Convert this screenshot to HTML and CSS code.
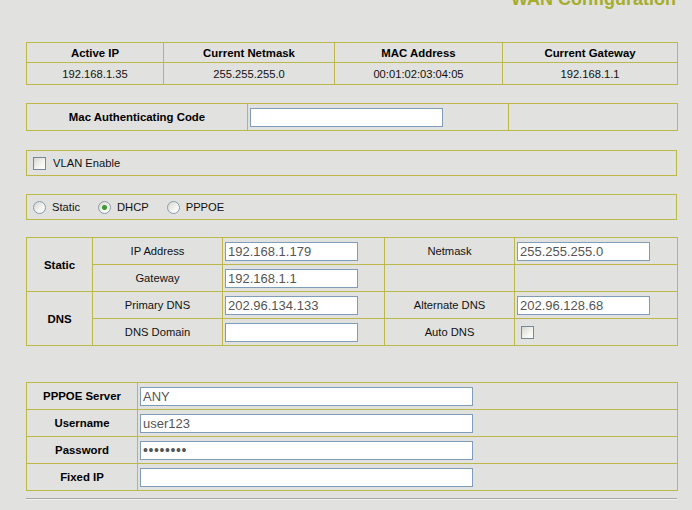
FILE: index.html
```html
<!DOCTYPE html>
<html>
<head>
<meta charset="utf-8">
<title>WAN Configuration</title>
<link rel="stylesheet" href="styles.css">
</head>
<body>
<div class="page">
  <h1 class="title">WAN Configuration</h1>

  <table class="grid status">
    <colgroup><col class="w137"><col class="w171"><col class="w168"><col class="w175"></colgroup>
    <tr class="hrow"><th>Active IP</th><th>Current Netmask</th><th>MAC Address</th><th>Current Gateway</th></tr>
    <tr class="drow"><td>192.168.1.35</td><td>255.255.255.0</td><td>00:01:02:03:04:05</td><td>192.168.1.1</td></tr>
  </table>

  <table class="grid mac">
    <colgroup><col class="w221"><col class="w261"><col class="w169"></colgroup>
    <tr class="row26"><th>Mac Authenticating Code</th><td class="left pad2"><input class="field w193" type="text"></td><td></td></tr>
  </table>

  <div class="box">
    <label class="opt"><input type="checkbox" class="check">VLAN Enable</label>
  </div>

  <div class="box radios">
    <label class="opt"><input type="radio" name="mode" class="radio">Static</label>
    <label class="opt"><input type="radio" name="mode" class="radio" checked>DHCP</label>
    <label class="opt"><input type="radio" name="mode" class="radio">PPPOE</label>
  </div>

  <table class="grid static">
    <colgroup><col class="w66"><col class="w130"><col class="w162"><col class="w130"><col class="w163"></colgroup>
    <tr class="row27">
      <th rowspan="2">Static</th>
      <td>IP Address</td>
      <td class="left pad2"><input class="field w133" type="text" value="192.168.1.179"></td>
      <td>Netmask</td>
      <td class="left pad2"><input class="field w133" type="text" value="255.255.255.0"></td>
    </tr>
    <tr class="row27">
      <td>Gateway</td>
      <td class="left pad2"><input class="field w133" type="text" value="192.168.1.1"></td>
      <td></td>
      <td></td>
    </tr>
    <tr class="row27">
      <th rowspan="2">DNS</th>
      <td>Primary DNS</td>
      <td class="left pad2"><input class="field w133" type="text" value="202.96.134.133"></td>
      <td>Alternate DNS</td>
      <td class="left pad2"><input class="field w133" type="text" value="202.96.128.68"></td>
    </tr>
    <tr class="row27">
      <td>DNS Domain</td>
      <td class="left pad2"><input class="field w133" type="text"></td>
      <td>Auto DNS</td>
      <td class="left pad6"><input type="checkbox" class="check"></td>
    </tr>
  </table>

  <table class="grid pppoe">
    <colgroup><col class="w111"><col class="w540"></colgroup>
    <tr class="row27"><th>PPPOE Server</th><td class="left pad2"><input class="field w333" type="text" value="ANY"></td></tr>
    <tr class="row27"><th>Username</th><td class="left pad2"><input class="field w333" type="text" value="user123"></td></tr>
    <tr class="row27"><th>Password</th><td class="left pad2"><input class="field w333 pw" type="password" value="password"></td></tr>
    <tr class="row27"><th>Fixed IP</th><td class="left pad2"><input class="field w333" type="text"></td></tr>
  </table>

  <hr class="rule">
</div>
</body>
</html>
```
FILE: styles.css
```css
* { box-sizing: border-box; }
html, body {
  margin: 0;
  padding: 0;
  background: #e1e1df;
  overflow: hidden;
}
body {
  font-family: "Liberation Sans", Arial, sans-serif;
  font-size: 11.2px;
  color: #111;
}
.page {
  width: 651px;
  margin-left: 26px;
}
.title {
  margin: -10px 0 0;
  height: 18px;
  line-height: 18px;
  font-size: 18px;
  font-weight: bold;
  color: #a5ad2d;
  text-align: right;
  padding-right: 1px;
}

.grid {
  width: 651px;
  border-collapse: collapse;
  table-layout: fixed;
}
.grid th, .grid td {
  border: 1px solid #bdb84a;
  padding: 0;
  text-align: center;
  vertical-align: middle;
  font-weight: normal;
}
.grid th {
  font-weight: bold;
  font-size: 11.4px;
  color: #000;
}
.left { text-align: left !important; }
.pad2 { padding-left: 2px !important; }
.pad6 { padding-left: 6px !important; }

.w137 { width: 137px; }
.w171 { width: 171px; }
.w168 { width: 168px; }
.w175 { width: 175px; }
.w221 { width: 221px; }
.w261 { width: 261px; }
.w169 { width: 169px; }
.w66 { width: 66px; }
.w130 { width: 130px; }
.w162 { width: 162px; }
.w163 { width: 163px; }
.w111 { width: 111px; }
.w540 { width: 540px; }

.status { margin-top: 34px; }
.hrow th { height: 20px; }
.drow td { height: 22px; }

.mac { margin-top: 18px; }
.row26 > * { height: 27px; }
.row27 > * { height: 27px; }

.field {
  height: 19px;
  margin: 0;
  border: 1px solid #7f9db9;
  background: #fff;
  padding: 0 2px;
  font-family: "Liberation Sans", Arial, sans-serif;
  font-size: 13px;
  color: #555;
  vertical-align: middle;
  outline: none;
}
.w193 { width: 193px; }
.w133 { width: 133px; }
.w333 { width: 333px; }
.pw { font-size: 14px; letter-spacing: 0.6px; color: #555; }

.box {
  display: flex;
  align-items: center;
  height: 26px;
  border: 1px solid #bdb84a;
  margin-top: 19px;
  padding-left: 6px;
  color: #111;
}
.radios { margin-top: 18px; }
.opt {
  display: inline-flex;
  align-items: center;
  margin-right: 18px;
}
.check, .radio {
  -webkit-appearance: none;
  appearance: none;
  width: 13px;
  height: 13px;
  margin: 0 7px 0 0;
  border: 1px solid #76879a;
  background: linear-gradient(135deg, #d8d8d2 0%, #f4f4f0 60%, #ffffff 100%);
  vertical-align: middle;
}
.radio {
  border-radius: 50%;
  border-color: #8a9aab;
  margin-right: 6px;
}
.radio:checked {
  background: radial-gradient(circle at 50% 50%, #3a9a2e 0, #3a9a2e 2px, rgba(58,154,46,0) 3px),
              linear-gradient(135deg, #d8d8d2 0%, #f4f4f0 60%, #ffffff 100%);
}

.static { margin-top: 17px; }
.pppoe { margin-top: 36px; }

.rule {
  margin: 7px 0 0;
  height: 2px;
  border: 0;
  border-top: 1px solid #a9a9a3;
  border-bottom: 1px solid #f2f2ee;
}
```
